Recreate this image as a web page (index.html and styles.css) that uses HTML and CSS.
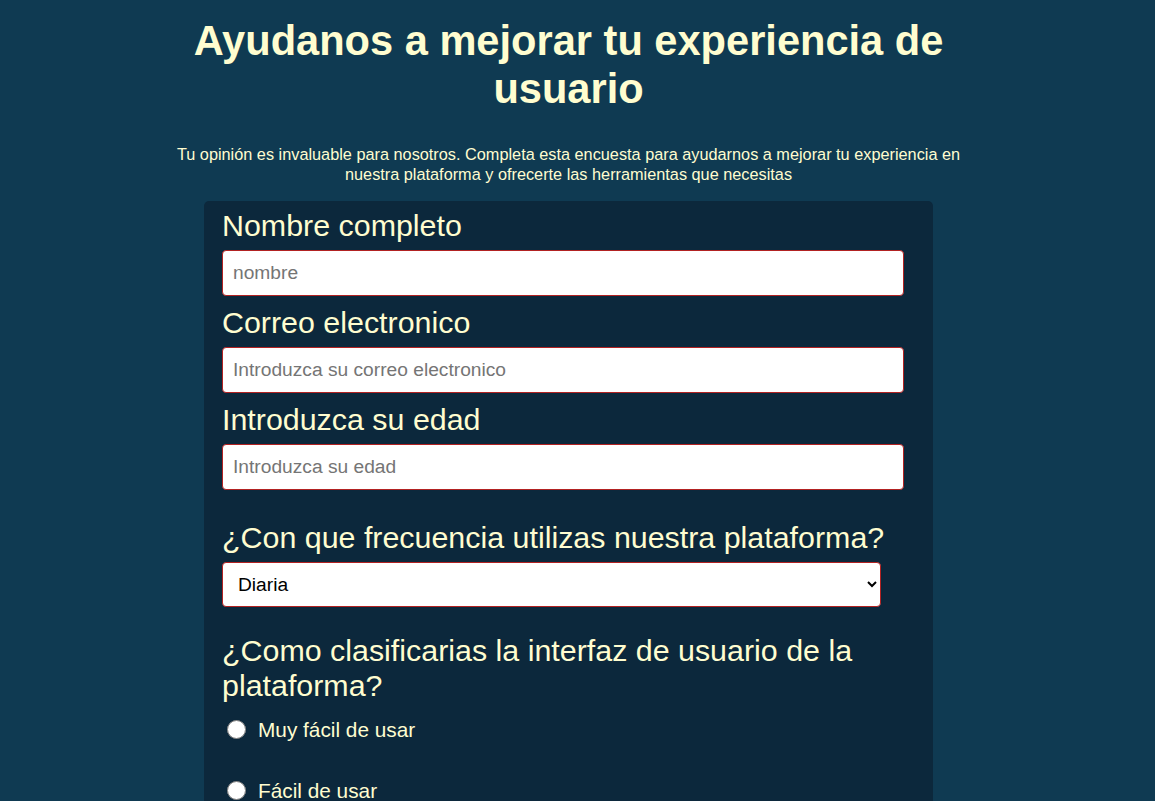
FILE: index.html
```html
<!DOCTYPE html>
<html lang="es">
<head>
<meta charset="utf-8">
<title>Encuesta</title>
<link rel="stylesheet" href="styles.css">
</head>
<body>
<main class="page">
  <header class="intro">
    <h1 class="title">Ayudanos a mejorar tu experiencia de usuario</h1>
    <p class="lead">Tu opinión es invaluable para nosotros. Completa esta encuesta para ayudarnos a mejorar tu experiencia en nuestra plataforma y ofrecerte las herramientas que necesitas</p>
  </header>
  <form class="survey">
    <label class="field-label" for="nombre">Nombre completo</label>
    <input class="text-input" id="nombre" type="text" placeholder="nombre">
    <label class="field-label" for="correo">Correo electronico</label>
    <input class="text-input" id="correo" type="email" placeholder="Introduzca su correo electronico">
    <label class="field-label" for="edad">Introduzca su edad</label>
    <input class="text-input" id="edad" type="number" placeholder="Introduzca su edad">

    <div class="question">
      <label class="field-label" for="frecuencia">¿Con que frecuencia utilizas nuestra plataforma?</label>
      <select class="select-input" id="frecuencia">
        <option>Diaria</option>
        <option>Semanal</option>
        <option>Mensual</option>
      </select>
    </div>

    <div class="question question-radio">
      <p class="field-label">¿Como clasificarias la interfaz de usuario de la plataforma?</p>
      <div class="options">
        <label class="option"><input class="radio" type="radio" name="interfaz"> Muy fácil de usar</label>
        <label class="option"><input class="radio" type="radio" name="interfaz"> Fácil de usar</label>
        <label class="option"><input class="radio" type="radio" name="interfaz"> Difícil de usar</label>
      </div>
    </div>
  </form>
</main>
</body>
</html>
```

FILE: styles.css
```css
html, body {
  margin: 0;
  padding: 0;
}
body {
  background: #0f3a52;
  color: #fffdd0;
  font-family: "Liberation Sans", Arial, sans-serif;
  padding-right: 18px;
}
.page {
  width: 800px;
  margin: 0 auto;
}
.intro {
  text-align: center;
}
.title {
  margin: 17px 0 0;
  font-size: 41.6px;
  font-weight: bold;
  line-height: 1.149;
  color: #fffdd0;
}
.lead {
  margin: 31px 0 17px;
  font-size: 16.3px;
  line-height: 20px;
  color: #fffdd0;
}
.survey {
  width: 729px;
  box-sizing: border-box;
  margin: 0 auto;
  padding: 7px 18px 40px;
  background: #0c283c;
  border-radius: 5px;
}
.field-label {
  display: block;
  margin: 0 0 7px;
  font-size: 30.4px;
  line-height: 35px;
  color: #fffdd0;
}
.text-input {
  display: block;
  width: 682px;
  height: 46px;
  box-sizing: border-box;
  margin: 0 0 9px;
  padding: 0 10px;
  border: 1px solid #b22222;
  border-radius: 4px;
  background: #fff;
  font-family: "Liberation Sans", Arial, sans-serif;
  font-size: 19.2px;
  color: #000;
}
.text-input::placeholder {
  color: #757575;
}
.question {
  margin-top: 30px;
}
.select-input {
  display: block;
  width: 659px;
  height: 45px;
  box-sizing: border-box;
  padding: 0 11px;
  border: 1px solid #b22222;
  border-radius: 4px;
  background: #fff;
  font-family: "Liberation Sans", Arial, sans-serif;
  font-size: 19.2px;
  color: #000;
}
.question-radio {
  margin-top: 26px;
}
.question-radio .field-label {
  margin-bottom: 15px;
}
.options {
  display: flex;
  flex-direction: column;
  gap: 37px;
}
.option {
  display: flex;
  align-items: center;
  font-size: 20.8px;
  line-height: 24px;
  color: #fffdd0;
}
.radio {
  width: 19px;
  height: 19px;
  margin: 0 12px 0 5px;
}
```
